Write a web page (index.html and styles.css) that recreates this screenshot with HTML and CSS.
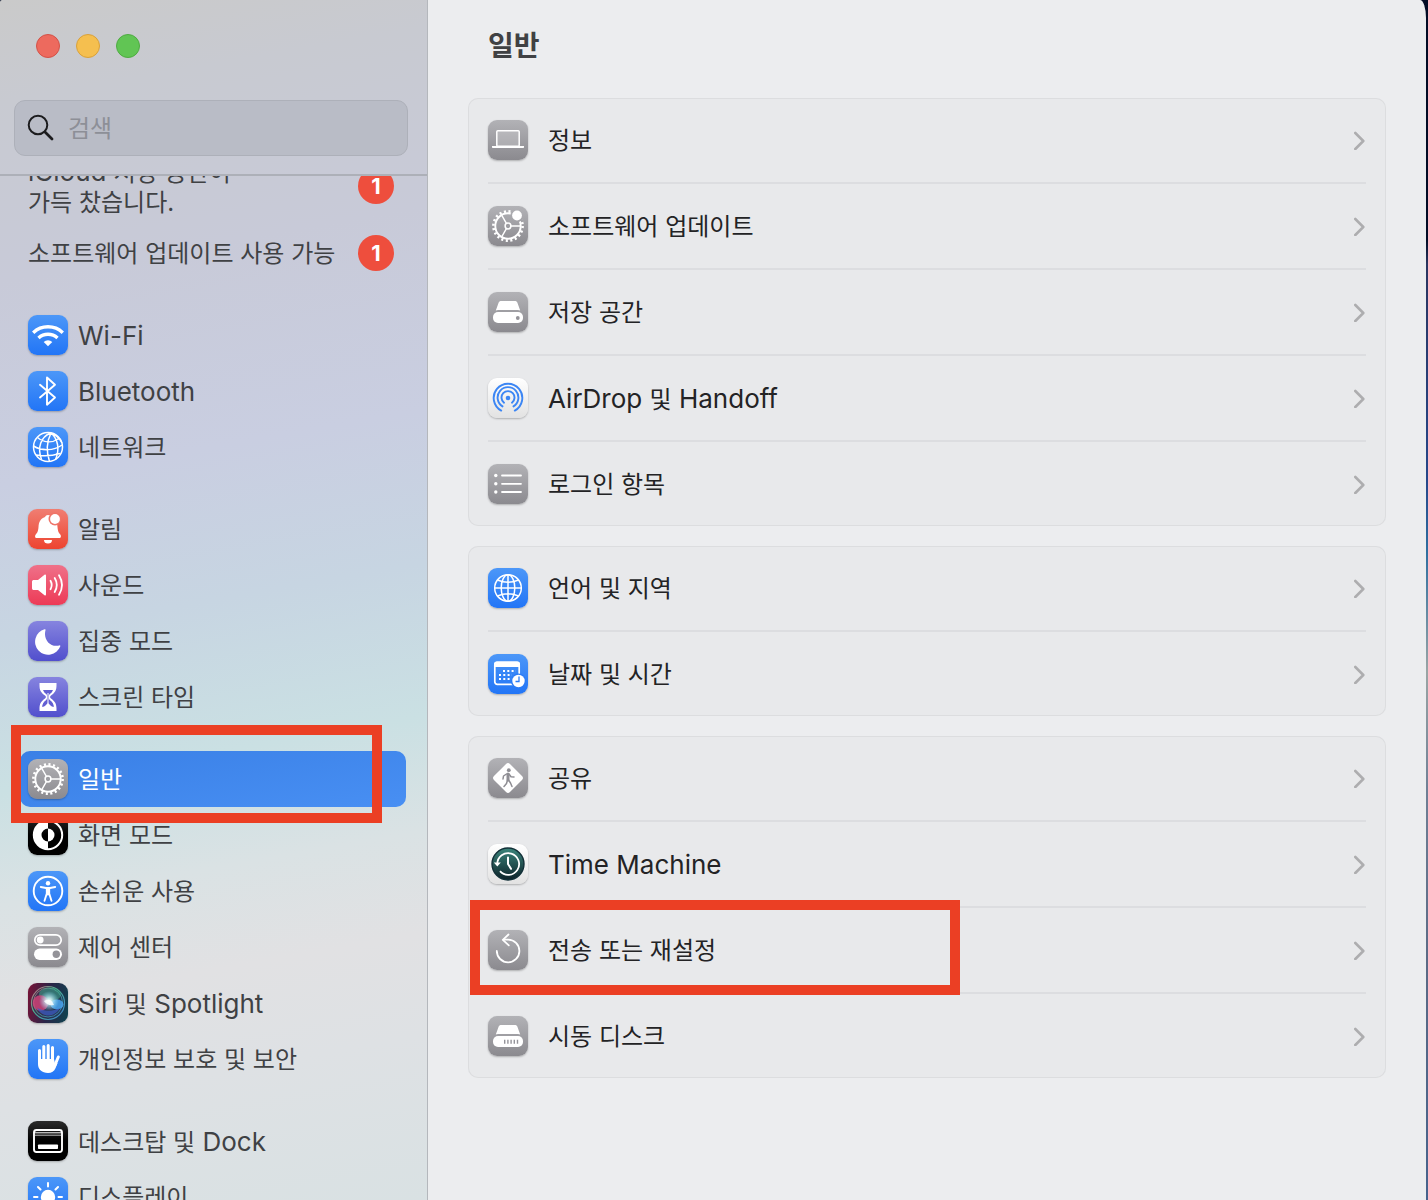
FILE: index.html
```html
<!DOCTYPE html>
<html lang="ko">
<head>
<meta charset="utf-8">
<title>일반</title>
<link rel="stylesheet" href="styles.css">
</head>
<body>
<svg class="defs" width="0" height="0" aria-hidden="true">
  <defs>
    <g id="gear-spokes" fill="none" stroke="#fff">
      <circle cx="20" cy="20" r="2.9" stroke-width="1.5"/>
      <path d="M23 20h10M18.4 17.4L13.5 8.8M18.4 22.6l-4.900 8.600" stroke-width="1.4"/>
    </g>
    <g id="gear-ring" fill="none" stroke="#fff">
      <circle cx="20" cy="20" r="12.700" stroke-width="1.900"/>
      <circle cx="20" cy="20" r="14.600" stroke-width="2.600" stroke-dasharray="2.100 2.487"/>
    </g>
    <mask id="badge-cut"><rect width="40" height="40" fill="#fff"/><circle cx="29" cy="9.500" r="6.600" fill="#000"/></mask>
    <radialGradient id="siri-glow"><stop offset="0" stop-color="#fff"/><stop offset=".3" stop-color="#dff" stop-opacity=".8"/><stop offset="1" stop-color="#8df" stop-opacity="0"/></radialGradient>
    <linearGradient id="siri-ring" x1="0" y1="0" x2="1" y2="1"><stop offset="0" stop-color="#d0607c"/><stop offset=".4" stop-color="#4cae8c"/><stop offset="1" stop-color="#3b7fd0"/></linearGradient>
    <linearGradient id="tm-face" x1="0" y1="0" x2="0" y2="1"><stop offset="0" stop-color="#3b857b"/><stop offset="1" stop-color="#0d2229"/></linearGradient>
  </defs>
</svg>

<div class="window">
  <aside class="sidebar">
    <header class="sidebar-top">
      <div class="lights">
        <button class="light light-close" type="button" aria-label="닫기"></button>
        <button class="light light-min" type="button" aria-label="최소화"></button>
        <button class="light light-zoom" type="button" aria-label="확대"></button>
      </div>
      <label class="search">
        <svg width="28" height="28" viewBox="0 0 28 28" aria-hidden="true"><circle cx="11" cy="11" r="9.300" fill="none" stroke="#1c1c1e" stroke-width="2"/><path d="M18 18l7 7" stroke="#1c1c1e" stroke-width="2.800" stroke-linecap="round"/></svg>
        <input type="search" placeholder="검색" aria-label="검색">
      </label>
    </header>

    <nav class="nav">
      <div class="group notices">
        <a class="row notice notice-tall" href="#icloud"><span><span class="latin">iCloud </span>저장 공간이<br>가득 찼습니다.</span><b class="count">1</b></a>
        <a class="row notice" href="#update"><span>소프트웨어 업데이트 사용 가능</span><b class="count">1</b></a>
      </div>

      <div class="group">
        <a class="row" href="#wifi"><svg class="icon blue" viewBox="0 0 40 40"><g fill="none" stroke="#fff" stroke-width="3.400"><path d="M5.200 17.700a21.500 21.500 0 0 1 29.600 0"/><path d="M10.500 23a14 14 0 0 1 19 0"/></g><path d="M20 31.200l-4.300-4.300a6.200 6.200 0 0 1 8.600 0z" fill="#fff"/></svg><span class="latin">Wi-Fi</span></a>
        <a class="row" href="#bluetooth"><svg class="icon blue" viewBox="0 0 40 40"><path d="M12 13.800L27 26.500l-8 7.200V6.500l8 7.200L12 26.400" fill="none" stroke="#fff" stroke-width="1.900" stroke-linejoin="round" stroke-linecap="round"/></svg><span class="latin">Bluetooth</span></a>
        <a class="row" href="#network"><svg class="icon blue" viewBox="0 0 40 40"><g fill="none" stroke="#fff" stroke-width="1.500"><circle cx="20" cy="20" r="14.500"/><path d="M22.500 6C13 10 9 20 13.500 32.500M23 6c-4 8-5 18-1.500 28.500M23 6c7 6 9 16 4.500 26.500M22.500 6c5 1.500 9 5 11.500 10M9.500 10.500c6 5 14 6 21.500 1M5.500 19c8 5 20 5 28.500-1M8 28c8 1.500 16 1 24-1.500"/></g></svg><span>네트워크</span></a>
      </div>

      <div class="group">
        <a class="row" href="#notifications"><svg class="icon red" viewBox="0 0 40 40"><path d="M20 6c1.500 0 2.500.7 3 2 4.500 1.500 6.200 5 6.500 10 .3 4.500 1.500 6 2.800 7.500.8 1 1 3.500-.8 3.500h-23c-1.800 0-1.600-2.500-.8-3.500C9 24 10.200 22.500 10.500 18c.3-5 2-8.500 6.500-10 .5-1.300 1.500-2 3-2z" fill="#fff"/><path d="M16 31h8a4 3.600 0 0 1-8 0z" fill="#fff"/><circle cx="27" cy="10" r="6.500" fill="#ef7468"/><circle cx="27" cy="10" r="4.900" fill="#fff"/></svg><span>알림</span></a>
        <a class="row" href="#sound"><svg class="icon pink" viewBox="0 0 40 40"><path d="M4 17c0-1.500.6-2 2-2h4l6.500-5.200c.8-.6 1.500-.3 1.500.7v19c0 1-.7 1.300-1.500.7L10 25H6c-1.400 0-2-.6-2-2z" fill="#fff"/><path d="M22.500 15.800q2.400 4.200 0 8.400M26.700 13q4.200 7 0 14M31 10.300q6 9.700 0 19.400" fill="none" stroke="#fff" stroke-width="1.800" stroke-linecap="round"/></svg><span>사운드</span></a>
        <a class="row" href="#focus"><svg class="icon indigo" viewBox="0 0 40 40"><path d="M16.500 8.300c.8-.4 1.300 0 1 .9-2.500 9 4.500 17.500 13.800 15.200.9-.2 1.300.3.900 1.100A13 13 0 1 1 16.500 8.300z" fill="#fff"/></svg><span>집중 모드</span></a>
        <a class="row" href="#screentime"><svg class="icon indigo" viewBox="0 0 40 40"><path d="M11.500 6h17v2.200c0 5.300-1.500 7.300-5.500 10.300-1.200 1-1.200 2 0 3 4 3 5.500 5 5.500 10.300V34h-17v-2.200c0-5.300 1.500-7.300 5.500-10.300 1.200-1 1.200-2 0-3-4-3-5.500-5-5.500-10.300z" fill="#fff"/><path d="M15 13h10c-.8 2-1.700 3-3.200 4-1.300 1-1.300 5 0 6 2.700 2 4.200 4.500 4 7-3-.2-3.800-2-5.800-4.500-2 2.500-2.800 4.300-5.800 4.500-.2-2.500 1.300-5 4-7 1.300-1 1.300-5 0-6-1.500-1-2.400-2-3.200-4z" fill="#625fd3"/><path d="M20 16v10" stroke="#fff"/></svg><span>스크린 타임</span></a>
      </div>

      <div class="group">
        <a class="row selected" href="#general" aria-current="page"><svg class="icon gray" viewBox="0 0 40 40"><use href="#gear-ring"/><use href="#gear-spokes"/></svg><span>일반</span><span class="mark mark-nav"></span></a>
        <a class="row" href="#appearance"><svg class="icon black" viewBox="0 0 40 40"><circle cx="20" cy="20" r="14.200" fill="none" stroke="#fff" stroke-width="2"/><path d="M20 6a14 14 0 0 0 0 28v-7.500a6.500 6.500 0 0 1 0-13z" fill="#fff"/><path d="M20 13.500a6.500 6.500 0 0 1 0 13z" fill="#fff"/></svg><span>화면 모드</span></a>
        <a class="row" href="#accessibility"><svg class="icon blue" viewBox="0 0 40 40"><circle cx="20" cy="20" r="14.300" fill="none" stroke="#fff" stroke-width="1.900"/><circle cx="20" cy="12.300" r="2.200" fill="#fff"/><path d="M12.800 16l5.200 1h4l5.200-1M20 17v6.500M18.800 17.500v5l-2.300 7.300M21.200 17.500v5l2.300 7.300" fill="none" stroke="#fff" stroke-width="1.900" stroke-linecap="round" stroke-linejoin="round"/></svg><span>손쉬운 사용</span></a>
        <a class="row" href="#control-center"><svg class="icon gray" viewBox="0 0 40 40"><rect x="6.800" y="7.800" width="26.400" height="10.400" rx="5.200" fill="none" stroke="#fff" stroke-width="1.700"/><circle cx="12.200" cy="13" r="3.400" fill="#fff"/><rect x="6" y="21.500" width="28" height="11.500" rx="5.700" fill="#fff"/><circle cx="28.300" cy="27.200" r="3.700" fill="#949399"/></svg><span>제어 센터</span></a>
        <a class="row" href="#siri"><svg class="icon siri" viewBox="0 0 40 40"><circle cx="20" cy="20" r="16.500" fill="#2c3f5c" fill-opacity=".5" stroke="url(#siri-ring)" stroke-width="1.200"/><circle cx="20" cy="19.500" r="14.500" fill="none" stroke="url(#siri-ring)" stroke-width=".8"/><ellipse cx="22" cy="11.500" rx="11" ry="7" fill="#3fb491" fill-opacity=".5"/><circle cx="12.500" cy="20" r="7.800" fill="#e0447c" fill-opacity=".75"/><ellipse cx="29" cy="21.500" rx="6.500" ry="5" fill="#4aa4f0" fill-opacity=".85"/><path d="M9 25c7 3 15 4 23 0-5 9-17 11-23 0z" fill="#3d5cc8" fill-opacity=".7"/><circle cx="21" cy="18" r="10" fill="url(#siri-glow)"/><path d="M16 18q7-4 10 4-7 1-10-4z" fill="#fff" fill-opacity=".8"/></svg><span><span class="latin">Siri </span>및<span class="latin"> Spotlight</span></span></a>
        <a class="row" href="#privacy"><svg class="icon blue" viewBox="0 0 40 40"><g stroke="#fff" stroke-width="3" stroke-linecap="round" fill="none"><path d="M11.500 11.500v12M15.800 7.500V22M20.200 6.500V22M24.500 8.500V22M30.300 18l-3.300 8"/></g><path d="M10 20h16l1 4.500 2.600-.5-2 5c-1.400 3.400-4 5-7.600 5-6 0-10-3.500-10-9z" fill="#fff"/></svg><span>개인정보 보호 및 보안</span></a>
      </div>

      <div class="group">
        <a class="row" href="#desktop"><svg class="icon black" viewBox="0 0 40 40"><rect x="6" y="9" width="28" height="22" rx="2.500" fill="none" stroke="#fff" stroke-width="1.900"/><path d="M7 11.800h26" stroke="#fff"/><path d="M7 14.200h26" stroke="#bbb"/><rect x="10" y="23.500" width="20" height="4.500" rx=".8" fill="#fff"/></svg><span>데스크탑 및<span class="latin"> Dock</span></span></a>
        <a class="row" href="#displays"><svg class="icon blue" viewBox="0 0 40 40"><circle cx="20" cy="20" r="7.200" fill="#fff"/><path d="M20 6v3.500M20 30.500V34M6 20h3.500M30.500 20H34M10 10l2.500 2.500M27.500 27.500L30 30M30 10l-2.500 2.500M12.500 27.500L10 30" stroke="#fff" stroke-width="2" stroke-linecap="round"/></svg><span>디스플레이</span></a>
      </div>
    </nav>
  </aside>

  <main class="content">
    <h1>일반</h1>

    <section class="card">
      <a class="item" href="#about"><svg class="icon gray" viewBox="0 0 40 40"><rect x="8.800" y="10.800" width="22.400" height="15.500" rx="1" fill="#fff" fill-opacity=".2" stroke="#fff" stroke-width="1.500"/><path d="M4 26h32v1.200q0 .8-.8.800H4.800q-.8 0-.8-.8z" fill="#fff"/></svg><span>정보</span></a>
      <a class="item" href="#software-update"><svg class="icon gray" viewBox="0 0 40 40"><g mask="url(#badge-cut)"><use href="#gear-ring"/></g><use href="#gear-spokes"/><circle cx="29" cy="9.500" r="4.900" fill="#fff"/></svg><span>소프트웨어 업데이트</span></a>
      <a class="item" href="#storage"><svg class="icon gray" viewBox="0 0 40 40"><path d="M13.500 9h13c1.700 0 2.500.6 3 2l2.700 7.500q-1-.4-2.200-.4H10q-1.200 0-2.200.4L10.500 11c.5-1.400 1.300-2 3-2z" fill="#fff"/><rect x="5" y="20" width="30" height="11" rx="5" fill="#fff"/><circle cx="29.800" cy="26" r="1.900" fill="#949399"/></svg><span>저장 공간</span></a>
      <a class="item" href="#airdrop"><svg class="icon white" viewBox="0 0 40 40"><g fill="none" stroke="#3c86f4" stroke-width="1.900" stroke-linecap="round"><path d="M13.200 32.600a14.300 14.300 0 1 1 13.600 0"/><path d="M14.500 28.400a10.400 10.400 0 1 1 11 0"/><path d="M16 24.700a6.500 6.500 0 1 1 8 0"/></g><circle cx="20" cy="20" r="2.300" fill="#3c86f4"/></svg><span><span class="latin">AirDrop </span>및<span class="latin"> Handoff</span></span></a>
      <a class="item" href="#login-items"><svg class="icon gray" viewBox="0 0 40 40"><path d="M14 11.500h19M14 19.800h19M14 28h19" stroke="#fff" stroke-width="1.800" stroke-linecap="round"/><g fill="#fff"><circle cx="7.800" cy="11.500" r="1.700"/><circle cx="7.800" cy="19.800" r="1.700"/><circle cx="7.800" cy="28" r="1.700"/></g></svg><span>로그인 항목</span></a>
    </section>

    <section class="card">
      <a class="item" href="#language"><svg class="icon blue" viewBox="0 0 40 40"><g fill="none" stroke="#fff" stroke-width="1.500"><circle cx="20" cy="20" r="13.300"/><ellipse cx="20" cy="20" rx="6.800" ry="13.300"/><path d="M20 6.700v26.600M6.700 20h26.600M9.500 12q10.500 4.500 21 0M9.500 28q10.500-4.500 21 0"/></g></svg><span>언어 및 지역</span></a>
      <a class="item" href="#date"><svg class="icon blue" viewBox="0 0 40 40"><rect x="6.800" y="8.300" width="24.400" height="22" rx="2.500" fill="none" stroke="#fff" stroke-width="1.700"/><path d="M6 13V10q0-2.500 2.500-2.500h21Q32 7.500 32 10v3z" fill="#fff"/><path d="M15 17h13M11 21h13M11 25h13" stroke="#fff" stroke-width="2" stroke-dasharray="2 2.300"/><circle cx="30.500" cy="27" r="7.600" fill="#2b7cf6"/><circle cx="30.500" cy="27" r="6.200" fill="#fff"/><path d="M31 22.500V27.500h-3.500" fill="none" stroke="#2b7cf6" stroke-width="1.300"/></svg><span>날짜 및 시간</span></a>
    </section>

    <section class="card">
      <a class="item" href="#sharing"><svg class="icon gray" viewBox="0 0 40 40"><rect x="8.700" y="8.700" width="22.600" height="22.600" rx="2.800" transform="rotate(45 20 20)" fill="#fff"/><circle cx="20.800" cy="12.200" r="1.900" fill="#8f8e94"/><g fill="none" stroke="#8f8e94" stroke-width="1.500" stroke-linecap="round" stroke-linejoin="round"><path d="M20 16v6" stroke-width="3"/><path d="M18.500 16l-3 2-.5 3M21 16l2 2.700 3 .3M19.500 22l-1 3.500-2.500 3M20.500 22l2 3 1.500 3.500"/></g></svg><span>공유</span></a>
      <a class="item" href="#time-machine"><svg class="icon white" viewBox="0 0 40 40"><circle cx="20" cy="20" r="16" fill="url(#tm-face)" stroke="#123038" stroke-width="1.400"/><path d="M9.300 20A10.900 10.900 0 1 1 12 27.200" fill="none" stroke="#fff" stroke-width="1.800"/><path d="M5.800 18.500h7l-3.500 4z" fill="#fff"/><path d="M20 13.500V20l3 4.800" fill="none" stroke="#fff" stroke-width="2" stroke-linecap="round"/></svg><span class="latin">Time Machine</span></a>
      <a class="item" href="#reset"><svg class="icon gray" viewBox="0 0 40 40"><g fill="none" stroke="#fff" stroke-width="1.800" stroke-linecap="round" stroke-linejoin="round"><path d="M8.800 21A11.300 11.300 0 1 0 20 9.700h-4"/><path d="M20.500 4.500l-5.700 5.300 6 5.500"/></g></svg><span>전송 또는 재설정</span><span class="mark mark-item"></span></a>
      <a class="item" href="#startup-disk"><svg class="icon gray" viewBox="0 0 40 40"><path d="M13.500 9h13c1.700 0 2.500.6 3 2l2.700 7.500q-1-.4-2.200-.4H10q-1.200 0-2.200.4L10.500 11c.5-1.400 1.300-2 3-2z" fill="#fff"/><rect x="5" y="20" width="30" height="11" rx="5" fill="#fff"/><path d="M16 25.800h15" stroke="#949399" stroke-width="4" stroke-dasharray="1.400 1.800"/></svg><span>시동 디스크</span></a>
    </section>
  </main>
</div>
</body>
</html>
```
FILE: styles.css
```css
* { box-sizing: border-box; }

body {
  margin: 0;
  background: linear-gradient(#020c26 20%, #2a3560 22%, #26478a 40%, #2f6fa0 46%, #9aa5a5 56%, #6f7f95 66%, #5b6a85 80%, #46628c 100%);
  color: #232325;
  font: 24px/30px Inter, "Noto Sans CJK KR", sans-serif;
}

a { color: inherit; text-decoration: none; }

.latin { font-size: 26px; white-space: pre-wrap; }

.defs { position: absolute; }

.window {
  display: flex;
  height: 100vh;
  margin-right: 2px;
  border-radius: 2px 6px 0 0 / 2px 18px 0 0;
  overflow: hidden;
}

/* Sidebar */
.sidebar {
  display: flex;
  flex-direction: column;
  flex: none;
  width: 428px;
  border-right: 1px solid #b4b7bc;
  background: linear-gradient(170deg, #cacaca 0%, #c8cad1 8%, #c8cad8 22%, #c9cee1 38%, #c7d5e2 50%, #cae0e3 62%, #dae2e4 71%, #e1e1e3 79%, #dee1e4 87%, #d9e1e3 100%);
  color: #3f4144;
}

.sidebar-top {
  display: flex;
  flex-direction: column;
  flex: none;
  gap: 42px;
  padding: 34px 19px 18px 14px;
  border-bottom: 2px solid #adb0b8;
}

.lights { display: flex; gap: 16px; padding-left: 22px; }

.light {
  width: 24px;
  height: 24px;
  padding: 0;
  border: 1px solid;
  border-radius: 50%;
}
.light-close { background: #ed6a5e; border-color: #d35248; }
.light-min { background: #f5bf4f; border-color: #d9a13b; }
.light-zoom { background: #61c554; border-color: #4fab42; }

.search {
  display: flex;
  align-items: center;
  gap: 13px;
  height: 56px;
  padding: 0 12px;
  border: 1px solid #adb0b9;
  border-radius: 11px;
  background: #b9bcc6;
}
.search svg { flex: none; }
.search input {
  flex: 1;
  min-width: 0;
  padding: 2px 0 0;
  border: 0;
  outline: 0;
  background: none;
  color: inherit;
  font: inherit;
}
.search input::placeholder { color: #8d8f97; opacity: 1; }

.nav {
  display: flex;
  flex-direction: column;
  flex: 1;
  gap: 26px;
  min-height: 0;
  padding: 0 21px 0 20px;
  overflow: hidden;
}
.group { flex: none; }
.notices { margin-top: -29px; }

.row {
  position: relative;
  display: flex;
  align-items: center;
  gap: 10px;
  height: 56px;
  padding: 0 8px;
  border-radius: 10px;
  white-space: nowrap;
}
.row > span:not(.mark),
.item > span:not(.mark) { padding-top: 2px; }
.notice { justify-content: space-between; padding-right: 12px; }
.notice-tall { height: 78px; }
.selected { background: linear-gradient(170deg, #3a80e6, #488ff3); color: #fff; }

.count {
  width: 36px;
  height: 36px;
  border-radius: 50%;
  background: #ee4e3d;
  color: #fff;
  font-size: 22px;
  line-height: 36px;
  text-align: center;
}

/* App icons */
.icon {
  flex: none;
  width: 40px;
  height: 40px;
  border-radius: 9px;
  box-shadow: 0 1px 2px rgba(0, 0, 0, .25);
}
.blue { background: linear-gradient(#4c97f8, #2275f6); }
.gray { background: linear-gradient(#b2b2b6, #8b8a8f); }
.red { background: linear-gradient(#f07e72, #ed4430); }
.pink { background: linear-gradient(#ef7189, #ed3a56); }
.indigo { background: linear-gradient(#8684df, #514fcd); }
.black { background: linear-gradient(#2b2b2b, #000 50%); }
.white { background: linear-gradient(#fff, #e2e2e2); }
.siri { background: linear-gradient(100deg, #7a1236, #2a2548 50%, #0e4450); }

/* Content pane */
.content {
  display: flex;
  flex-direction: column;
  flex: 1;
  gap: 20px;
  min-width: 0;
  padding: 30px 40px;
  background: #ecedef;
  overflow: hidden;
}

h1 {
  margin: 0 0 16px;
  padding-left: 20px;
  color: #404143;
  font-size: 28px;
  line-height: 32px;
}

.card {
  flex: none;
  padding: 0 20px;
  border-radius: 10px;
  background: #e8e9eb;
  box-shadow: inset 0 0 0 1px #dcdddf;
}

.item {
  position: relative;
  display: flex;
  align-items: center;
  gap: 20px;
  height: 84px;
}
.item + .item { height: 86px; border-top: 2px solid #dcdde0; }
.item::after {
  content: "";
  width: 14px;
  height: 20px;
  margin-left: auto;
  background: url("data:image/svg+xml,%3Csvg xmlns='http://www.w3.org/2000/svg' width='14' height='20'%3E%3Cpath d='M3.300 3l8 8-8 8' fill='none' stroke='%23adadaf' stroke-width='2.600' stroke-linecap='round' stroke-linejoin='round'/%3E%3C/svg%3E") no-repeat;
}

/* Red annotation frames laid over the rows */
.mark {
  position: absolute;
  z-index: 1;
  border: 10px solid #eb3f24;
  pointer-events: none;
}
.mark-nav { top: -26px; left: -9px; width: 371px; height: 98px; }
.mark-item { top: -8px; left: -18px; width: 490px; height: 95px; }
```
